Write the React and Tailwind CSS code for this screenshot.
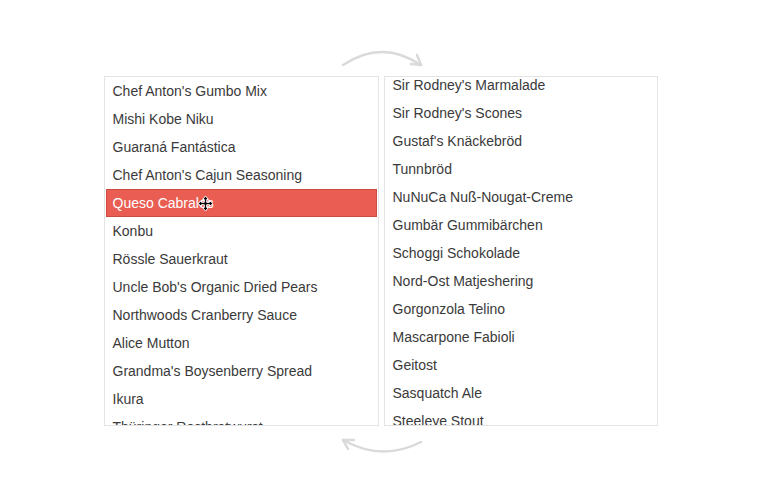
import React from 'react';

const leftItems = [
  "Chef Anton's Gumbo Mix",
  'Mishi Kobe Niku',
  'Guaraná Fantástica',
  "Chef Anton's Cajun Seasoning",
  'Queso Cabrales',
  'Konbu',
  'Rössle Sauerkraut',
  "Uncle Bob's Organic Dried Pears",
  'Northwoods Cranberry Sauce',
  'Alice Mutton',
  "Grandma's Boysenberry Spread",
  'Ikura',
  'Thüringer Rostbratwurst',
];

const rightItems = [
  "Sir Rodney's Marmalade",
  "Sir Rodney's Scones",
  "Gustaf's Knäckebröd",
  'Tunnbröd',
  'NuNuCa Nuß-Nougat-Creme',
  'Gumbär Gummibärchen',
  'Schoggi Schokolade',
  'Nord-Ost Matjeshering',
  'Gorgonzola Telino',
  'Mascarpone Fabioli',
  'Geitost',
  'Sasquatch Ale',
  'Steeleye Stout',
  'Inlagd Sill',
];

const MoveCursor = () => (
  <svg width="17" height="17" viewBox="0 0 17 17" className="absolute left-[90px] top-[5px]">
    <path
      d="M8.5 1 L11.5 4.5 H9.7 V7.3 H12.5 V5.5 L16 8.5 L12.5 11.5 V9.7 H9.7 V12.5 H11.5 L8.5 16 L5.5 12.5 H7.3 V9.7 H4.5 V11.5 L1 8.5 L4.5 5.5 V7.3 H7.3 V4.5 H5.5 Z"
      fill="#000"
      stroke="#fff"
      strokeWidth="1"
      strokeLinejoin="round"
    />
  </svg>
);

const Row = ({ label, selected }) =>
  selected ? (
    <div className="relative h-[28px] mx-[1px] flex items-center px-[6px] bg-[#e95d52] border border-[#cf4b41] text-white">
      {label}
      <MoveCursor />
    </div>
  ) : (
    <div className="h-[28px] flex items-center px-[8px] text-[#3a3a3a] whitespace-nowrap">{label}</div>
  );

export default function App() {
  return (
    <div
      className="w-[770px] h-[500px] bg-white flex flex-col items-center pt-[45px] text-[14px]"
      style={{ fontFamily: '"Liberation Sans", Arial, sans-serif' }}
    >
      <svg width="90" height="30" viewBox="0 0 90 30" className="mr-[6px]">
        <g fill="none" stroke="#dadada" strokeWidth="2.5" strokeLinecap="round">
          <path d="M6 20 Q45 -6 84 20" />
          <path d="M84 20 L74 19" />
          <path d="M84 20 L80 10" />
        </g>
      </svg>

      <div className="flex gap-[5px] mt-[1px] mr-[9px]">
        <div className="w-[275px] h-[350px] border border-[#e4e4e4] overflow-hidden">
          {leftItems.map((item, i) => (
            <Row key={item} label={item} selected={i === 4} />
          ))}
        </div>
        <div className="w-[274px] h-[350px] border border-[#e4e4e4] overflow-hidden">
          <div className="-mt-[6px]">
            {rightItems.map((item) => (
              <Row key={item} label={item} />
            ))}
          </div>
        </div>
      </div>

      <svg width="90" height="30" viewBox="0 0 90 30" className="mt-[4px] mr-[6px]">
        <g fill="none" stroke="#dadada" strokeWidth="2.5" strokeLinecap="round">
          <path d="M6 10 Q45 32 84 12" />
          <path d="M6 10 L17 10" />
          <path d="M6 10 L11 19" />
        </g>
      </svg>
    </div>
  );
}
